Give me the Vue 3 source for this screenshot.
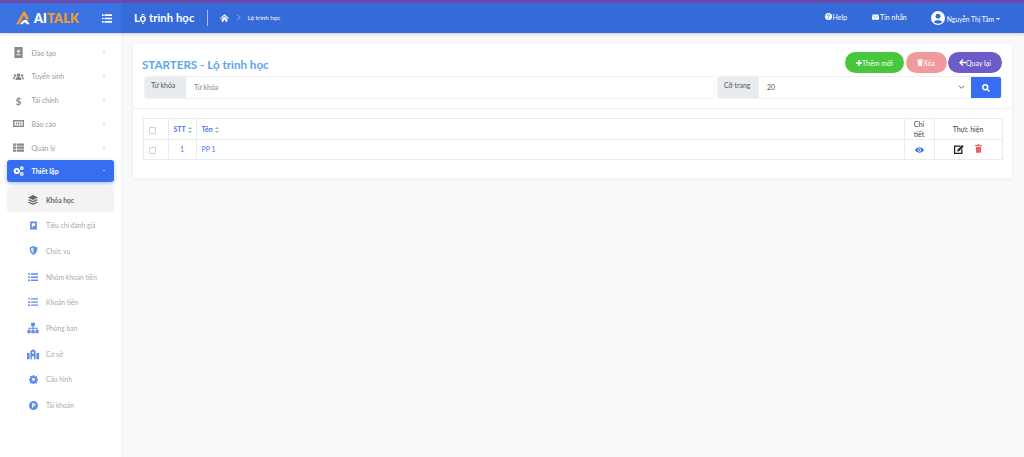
<script setup>
const menu = [
  { label: 'Đào tạo', icon: 'book' },
  { label: 'Tuyển sinh', icon: 'users' },
  { label: 'Tài chính', icon: 'dollar' },
  { label: 'Báo cáo', icon: 'report' },
  { label: 'Quản lý', icon: 'table' },
]
const sub = [
  { label: 'Tiêu chí đánh giá', icon: 'flag', size: 9 },
  { label: 'Chức vụ', icon: 'shield', size: 9 },
  { label: 'Nhóm khoản tiền', icon: 'list', size: 10 },
  { label: 'Khoản tiền', icon: 'listol', size: 10 },
  { label: 'Phòng ban', icon: 'sitemap', size: 12 },
  { label: 'Cơ sở', icon: 'building', size: 12 },
  { label: 'Cấu hình', icon: 'gear', size: 9 },
  { label: 'Tài khoản', icon: 'parking', size: 9 },
]
</script>

<template>
  <div class="page">
    <header class="top">
      <div class="brand">
        <svg class="logo" viewBox="0 0 20 17" width="17" height="14">
          <path d="M1 16 L9.500 1 L12 1 L17 10 L13 10 L10.500 5.500 L5 16 Z" fill="#f29a2e" />
          <path d="M6 16 Q10 9 14 11 L17.500 16 L14 16 Q11 12 9 16 Z" fill="#fff" />
        </svg>
        <span class="brand-text"><b class="ai">AI</b><b class="talk">TALK</b></span>
        <svg class="burger" viewBox="0 0 12 10" width="10" height="9" fill="#fff">
          <path d="M0 0h2v2H0zM3 0h9v2H3zM0 4h2v2H0zM3 4h9v2H3zM0 8h2v2H0zM3 8h9v2H3z" />
        </svg>
      </div>
      <div class="top-main">
        <h1 class="page-title">Lộ trình học</h1>
        <span class="vsep"></span>
        <svg class="home" viewBox="0 0 16 13" width="9" height="8" fill="#fff">
          <path d="M8 0 L16 7 L14.600 8 L8 2.400 L1.400 8 L0 7 Z M3 8.300 L8 4 L13 8.300 V13 H9.500 V9.500 H6.500 V13 H3 Z" />
        </svg>
        <svg class="chev" viewBox="0 0 6 10" width="5" height="7" fill="none" stroke="#c9d8f7" stroke-width="1">
          <path d="M1 1 L5 5 L1 9" />
        </svg>
        <span class="crumb">Lộ trình học</span>
        <div class="top-right">
          <span class="tl help">
            <svg viewBox="0 0 16 16" width="7" height="7"><circle cx="8" cy="8" r="8" fill="#fff" /><path d="M5.500 6a2.500 2.500 0 1 1 3.600 2.200c-.7.400-1.100.800-1.100 1.600" fill="none" stroke="#356ad9" stroke-width="2" /><rect x="7" y="11" width="2" height="2" fill="#356ad9" /></svg>
            Help
          </span>
          <span class="tl mail">
            <svg viewBox="0 0 16 12" width="7" height="6"><rect width="16" height="12" rx="1.500" fill="#fff" /><path d="M0 2 L8 7.500 L16 2" fill="none" stroke="#356ad9" stroke-width="1.200" /></svg>
            Tin nhắn
          </span>
          <span class="tl user">
            <svg viewBox="0 0 16 16" width="14" height="14"><circle cx="8" cy="8" r="8" fill="#fff" /><circle cx="8" cy="6" r="2.800" fill="#356ad9" /><path d="M3.200 12.600 C4 10 12 10 12.800 12.600 A6.600 6.600 0 0 1 3.200 12.600 Z" fill="#356ad9" /></svg>
            <span class="uname">Nguyễn Thị Tâm</span>
            <i class="caret"></i>
          </span>
        </div>
      </div>
    </header>

    <div class="body">
      <aside class="side">
        <div v-for="m in menu" :key="m.label" class="item">
          <svg class="ic" viewBox="0 0 16 16" width="11" height="11" fill="#8a8a8a">
            <template v-if="m.icon === 'book'">
              <path d="M2 0h12v16H2z" /><circle cx="8" cy="6" r="2.400" fill="#ddd" /><path d="M4.500 12c.5-3 6.500-3 7 0z" fill="#ddd" />
            </template>
            <template v-else-if="m.icon === 'users'">
              <circle cx="8" cy="6" r="2.600" /><circle cx="2.800" cy="6.500" r="1.800" /><circle cx="13.200" cy="6.500" r="1.800" /><path d="M3.500 13c0-6 9-6 9 0zM0 12c0-3 2-3.600 3-3l-.6 3zM16 12c0-3-2-3.600-3-3l.6 3z" />
            </template>
            <template v-else-if="m.icon === 'dollar'">
              <text x="8" y="14" text-anchor="middle" font-size="15" font-weight="700" font-family="Lato, sans-serif">$</text>
            </template>
            <template v-else-if="m.icon === 'report'">
              <path fill-rule="evenodd" d="M0 3h16v10H0zM2 5v6h12V5z" /><path d="M4 6.500h2v3H4zM7 6.500h2v3H7zM10 6.500h2v3h-2z" />
            </template>
            <template v-else>
              <path d="M0 2h4.500v3.400H0zM5.500 2H16v3.400H5.500zM0 6.400h4.500v3.400H0zM5.500 6.400H16v3.400H5.500zM0 10.800h4.500v3.400H0zM5.500 10.800H16v3.400H5.500z" />
            </template>
          </svg>
          <span class="lab">{{ m.label }}</span>
          <i class="mini"></i>
        </div>

        <div class="item active">
          <svg class="ic" viewBox="0 0 16 16" width="12" height="12" fill="#fff">
            <circle cx="5.500" cy="8" r="4.500" /><circle cx="5.500" cy="8" r="1.600" fill="#356ef0" />
            <circle cx="12.800" cy="3.800" r="2.700" /><circle cx="12.800" cy="3.800" r="1" fill="#356ef0" />
            <circle cx="12.800" cy="12.200" r="2.700" /><circle cx="12.800" cy="12.200" r="1" fill="#356ef0" />
          </svg>
          <span class="lab">Thiết lập</span>
          <i class="mini"></i>
        </div>

        <div class="sub current">
          <span class="sw">
            <svg viewBox="0 0 16 16" width="10" height="10" fill="#666">
              <path d="M8 0 L16 4 L8 8 L0 4Z M2 6.600 L8 9.600 L14 6.600 L16 8 L8 12 L0 8Z M2 10.600 L8 13.600 L14 10.600 L16 12 L8 16 L0 12Z" />
            </svg>
          </span>
          <span class="sl">Khóa học</span>
        </div>
        <div v-for="s in sub" :key="s.label" class="sub">
          <span class="sw">
            <svg viewBox="0 0 16 16" :width="s.size" :height="s.size" fill="#5f8bec">
              <template v-if="s.icon === 'flag'">
                <path fill-rule="evenodd" d="M2 1h12v14H2zM5 4v8h1.600V9H11V4z" />
              </template>
              <template v-else-if="s.icon === 'shield'">
                <path d="M8 0 L15 2.500 C15 9 12.500 13.500 8 16 C3.500 13.500 1 9 1 2.500Z" /><path d="M8 2.500 V13.300 C5.500 11.500 3.500 8.500 3.400 4.200Z" fill="#dfe8fb" />
              </template>
              <template v-else-if="s.icon === 'list'">
                <path d="M0 2h3v2.400H0zM4.500 2H16v2.400H4.500zM0 7h3v2.400H0zM4.500 7H16v2.400H4.500zM0 12h3v2.400H0zM4.500 12H16v2.400H4.500z" />
              </template>
              <template v-else-if="s.icon === 'listol'">
                <path d="M1 1h2v3.400H1zM5 2h11v2H5zM0 7h3.500v2.400H0zM5 7h11v2H5zM0 12h3.500v2.400H0zM5 12h11v2H5z" />
              </template>
              <template v-else-if="s.icon === 'sitemap'">
                <path d="M5.500 1h5v4.500H8.700v2H14V11h1.500v4H11v-4h1.600V9H8.700v2h1.500v4H5.800v-4h1.500V9H3.400v2H5v4H.5v-4H2V7.500h5.300v-2H5.500z" />
              </template>
              <template v-else-if="s.icon === 'building'">
                <path d="M4.500 15V4 L8 1.500 L11.500 4V15H9.500V11H6.500V15Z" /><path d="M0 6.500h3.400V15H0zM12.600 6.500H16V15h-3.400z" /><rect x="7" y="5" width="2" height="3" fill="#fff" />
              </template>
              <template v-else-if="s.icon === 'gear'">
                <path fill-rule="evenodd" d="M6.700 0h2.600l.4 2.200 1.500.6L13.100 1.600l1.800 1.800-1.200 1.900.6 1.500 2.200.4v2.600l-2.200.4-.6 1.500 1.200 1.900-1.800 1.800-1.900-1.200-1.500.6-.4 2.200H6.700l-.4-2.200-1.500-.6-1.900 1.200-1.800-1.800 1.200-1.900-.6-1.500L0 9.300V6.700l2.200-.4.600-1.500L1.600 2.900 3.400 1.100l1.900 1.200 1.500-.6zM8 5.500a2.500 2.500 0 1 0 0 5 2.500 2.500 0 0 0 0-5z" />
              </template>
              <template v-else>
                <path fill-rule="evenodd" d="M8 0a8 8 0 1 1 0 16A8 8 0 0 1 8 0zM5.500 4v8h2V9.500h1.500a2.750 2.750 0 0 0 0-5.500z" /><path d="M7.500 5.800h1.500a1 1 0 0 1 0 2H7.500z" />
              </template>
            </svg>
          </span>
          <span class="sl">{{ s.label }}</span>
        </div>
      </aside>

      <main class="content">
        <section class="card">
          <div class="card-head">
            <div class="title-row">
              <h2 class="card-title">STARTERS - Lộ trình học</h2>
              <div class="btns">
                <button class="pill green">
                  <svg viewBox="0 0 10 10" width="6" height="6" fill="#fff"><path d="M3.800 0h2.400v3.800H10v2.400H6.200V10H3.800V6.200H0V3.800h3.800z" /></svg>Thêm mới
                </button>
                <button class="pill red">
                  <svg viewBox="0 0 10 12" width="6" height="7" fill="#fff"><path d="M0 1h3.300l.4-1h2.600l.4 1H10v1.500H0zM1 3.500h8L8.400 12H1.600z" /></svg>Xóa
                </button>
                <button class="pill purple">
                  <svg viewBox="0 0 10 10" width="7" height="7" fill="#fff"><path d="M5 0 L6.300 1.300 L3.700 3.900 H10 V6.100 H3.700 L6.300 8.700 L5 10 L0 5Z" /></svg>Quay lại
                </button>
              </div>
            </div>
            <div class="filters">
              <div class="group grow">
                <span class="addon">Từ khóa</span>
                <input class="inp" type="text" placeholder="Từ khóa" />
              </div>
              <div class="group size">
                <span class="addon">Cỡ trang</span>
                <div class="sel">
                  <span>20</span>
                  <svg viewBox="0 0 10 6" width="7" height="4" fill="none" stroke="#555" stroke-width="1.300"><path d="M1 1 L5 5 L9 1" /></svg>
                </div>
                <button class="search">
                  <svg viewBox="0 0 16 16" width="8" height="8" fill="none" stroke="#fff" stroke-width="3"><circle cx="6.500" cy="6.500" r="4.800" /><path d="M10 10 L15 15" /></svg>
                </button>
              </div>
            </div>
          </div>

          <div class="table-wrap">
            <table class="tbl">
              <thead>
                <tr>
                  <th class="c-check"><i class="cb"></i></th>
                  <th class="c-stt link">STT <i class="sort"></i></th>
                  <th class="c-name link">Tên <i class="sort"></i></th>
                  <th class="c-det">Chi<br />tiết</th>
                  <th class="c-act">Thực hiện</th>
                </tr>
              </thead>
              <tbody>
                <tr>
                  <td class="c-check"><i class="cb"></i></td>
                  <td class="center link">1</td>
                  <td class="link">PP 1</td>
                  <td class="center">
                    <svg viewBox="0 0 16 10" width="9" height="6"><path d="M0 5 C4 -1.600 12 -1.600 16 5 C12 11.600 4 11.600 0 5Z" fill="#3f6fe8" /><circle cx="8" cy="5" r="3" fill="#fff" /><circle cx="8" cy="5" r="1.700" fill="#3f6fe8" /></svg>
                  </td>
                  <td class="center">
                    <span class="acts">
                      <svg viewBox="0 0 16 16" width="10" height="10"><path fill-rule="evenodd" d="M0 2.500h11L9.500 4.500H2v9.500h9.500V9L13.500 7v9H0z" fill="#222" /><path d="M5.500 9 L13 1.500 L15.500 4 L8 11.500 L5 12Z" fill="#222" /></svg>
                      <svg viewBox="0 0 10 12" width="7" height="9" fill="#ee5f63"><path d="M0 1h3.300l.4-1h2.600l.4 1H10v1.500H0zM1 3.500h8L8.400 12H1.600z" /></svg>
                    </span>
                  </td>
                </tr>
              </tbody>
            </table>
          </div>
        </section>
      </main>
    </div>
  </div>
</template>

<style>
html, body { margin: 0; padding: 0; background: #f8f9fb; }
</style>

<style scoped>
* { box-sizing: border-box; }
.page {
  width: 1024px;
  height: 457px;
  overflow: hidden;
  background: #f8f9fb;
  font-family: Lato, "Noto Sans", sans-serif;
  color: #555;
}
.top {
  display: flex;
  height: 33px;
  background: #356ad9;
  border-top: 3px solid #6a4aa8;
  box-shadow: 0 1px 3px rgba(0, 0, 0, .18);
  position: relative;
  z-index: 2;
}
.brand {
  width: 121px;
  background: #3a72e4;
  display: flex;
  align-items: center;
  padding-left: 14.500px;
  flex: none;
}
.logo { flex: none; }
.brand-text { font-size: 12.500px; margin-left: 2.500px; letter-spacing: .2px; }
.ai { color: #fff; font-weight: 800; }
.talk { color: #f29a2e; font-weight: 800; }
.burger { margin-left: auto; margin-right: 9px; }
.top-main {
  flex: 1;
  display: flex;
  align-items: center;
  padding-left: 13px;
  padding-bottom: 1px;
}
.page-title { margin: 0; font-size: 11.400px; font-weight: 700; color: #fff; font-family: Lato, sans-serif; }
.vsep { width: 1px; height: 16px; background: #a9c0f0; margin: 0 12px 0 13px; }
.chev { margin: 0 0 0 7px; }
.crumb { color: #fff; font-size: 6.300px; margin-left: 6px; }
.top-right { margin-left: auto; display: flex; align-items: center; padding-right: 24px; color: #fff; font-size: 7px; }
.tl { display: inline-flex; align-items: center; gap: 1px; }
.help { margin: 0 25px 2px 0; }
.mail { margin: 0 24px 2px 0; }
.uname { margin: 2px 0 0 1px; font-size: 6.700px; }
.caret { width: 0; height: 0; border: 2.500px solid transparent; border-top-color: #fff; border-bottom: 0; margin-left: 1px; margin-top: 2px; }

.body { display: flex; height: 424px; }
.side {
  width: 121px;
  flex: none;
  height: 100%;
  background: #fff;
  padding: 8px 7px 0;
  box-shadow: 1px 0 2px rgba(0, 0, 0, .02);
}
.item {
  display: flex;
  align-items: center;
  height: 23px;
  margin-bottom: .750px;
  padding: 0 7px;
  font-size: 7px;
  color: #999;
}
.ic { width: 11px; flex: none; margin-left: -1px; margin-right: 7.500px; }
.lab { flex: 1; }
.mini { width: 0; height: 0; border: 1.500px solid transparent; border-top-color: #888; border-bottom: 0; margin-right: 2px; }
.item.active {
  background: #356ef0;
  color: #fff;
  font-weight: 700;
  border-radius: 3px;
  box-shadow: 0 2px 5px rgba(53, 110, 240, .4);
  margin-top: .700px;
  height: 22px;
}
.item.active .mini { border-top-color: #fff; }
.sub {
  display: flex;
  align-items: center;
  height: 25.700px;
  padding-left: 20px;
  font-size: 6.700px;
  color: #aaa;
}
.sub.current {
  height: 25px;
  margin: 5.600px 0 0;
  background: #f3f3f3;
  border-radius: 3px;
  color: #666;
  font-weight: 700;
}
.sw { width: 12px; flex: none; display: flex; justify-content: center; margin-right: 7px; }

.content { flex: 1; padding: 11px 12px 0 12px; }
.card {
  width: 879px;
  height: 134px;
  background: #fff;
  border-radius: 3px;
  box-shadow: 0 1px 4px rgba(0, 0, 0, .06);
}
.card-head { padding: 7px 11px 9px 9px; border-bottom: 1px solid #eef0f3; height: 65px; }
.title-row { display: flex; align-items: flex-start; justify-content: space-between; height: 26px; }
.card-title { margin: 7px 0 0; font-size: 11.600px; font-weight: 700; color: #5aa6ee; font-family: Lato, sans-serif; }
.btns { display: flex; gap: 1.500px; margin-right: -1px; margin-top: 1px; }
.pill {
  height: 21px;
  border: 0;
  border-radius: 11px;
  color: #fff;
  font: 7px Lato, sans-serif;
  display: inline-flex;
  align-items: center;
  justify-content: center;
  padding: 0;
}
.green { width: 59px; background: #47c73d; }
.red { width: 41px; background: #f19a9c; }
.purple { width: 54px; background: #6b5cc6; }
.filters { display: flex; gap: 4px; padding-left: 3px; margin-top: 0; }
.group { display: flex; height: 21px; border-radius: 3px; box-shadow: 0 0 0 1px #eef0f3; }
.grow { width: 569px; }
.size { width: 283px; }
.addon {
  width: 41px;
  background: #e9ecef;
  color: #555;
  font-size: 7px;
  padding: 4px 0 0 6px;
  border-radius: 3px 0 0 3px;
  flex: none;
}
.inp {
  flex: 1;
  min-width: 0;
  border: 0;
  outline: 0;
  padding: 0 8px 2px;
  font: 7px Lato, sans-serif;
  background: #fff;
  color: #777;
}
.inp::placeholder { color: #888; opacity: 1; }
.sel {
  flex: 1;
  display: flex;
  align-items: center;
  justify-content: space-between;
  padding: 0 6px 2px 8px;
  font-size: 7px;
  color: #555;
}
.search {
  width: 30px;
  border: 0;
  background: #356ef0;
  border-radius: 0 2px 2px 0;
  padding: 0;
  display: flex;
  align-items: center;
  justify-content: center;
}
.table-wrap { padding: 9px 9.500px 0; }
.tbl { width: 860px; border-collapse: collapse; table-layout: fixed; font-size: 7px; color: #444; }
.tbl th, .tbl td { border: 1px solid #e9ebee; padding: 0; }
.tbl th { height: 21px; font-weight: 400; text-align: center; line-height: 10px; }
.tbl td { height: 20px; padding-bottom: 1px; }
.c-check { width: 25px; }
.tbl th.c-check, .tbl td.c-check { text-align: left; padding-left: 5px; padding-bottom: 0; }
.c-stt { width: 28px; }
.tbl th.c-stt { text-align: left; padding-left: 5px; }
.tbl th.c-name { text-align: left; padding-left: 5px; }
.tbl td.link:not(.center) { padding-left: 5px; }
.c-det { width: 30px; }
.c-act { width: 68px; }
.tbl .link { color: #4f77ef; }
.tbl th.link { font-weight: 700; }
.center { text-align: center; }
.tbl td.center { text-align: center; }
.cb { display: inline-block; width: 7px; height: 7px; border: 1px solid #cfd2d6; border-radius: 1px; background: #fff; vertical-align: middle; }
.sort { display: inline-block; width: 4px; height: 6px; vertical-align: -.5px; position: relative; margin-left: 1px; }
.sort::before, .sort::after { content: ""; position: absolute; left: 0; width: 0; height: 0; border: 2px solid transparent; }
.sort::before { top: 0; border-bottom-color: #aaa; border-top: 0; }
.sort::after { bottom: 0; border-top-color: #aaa; border-bottom: 0; }
.acts { display: inline-flex; align-items: center; gap: 11px; }
.tbl svg { vertical-align: middle; }
</style>
